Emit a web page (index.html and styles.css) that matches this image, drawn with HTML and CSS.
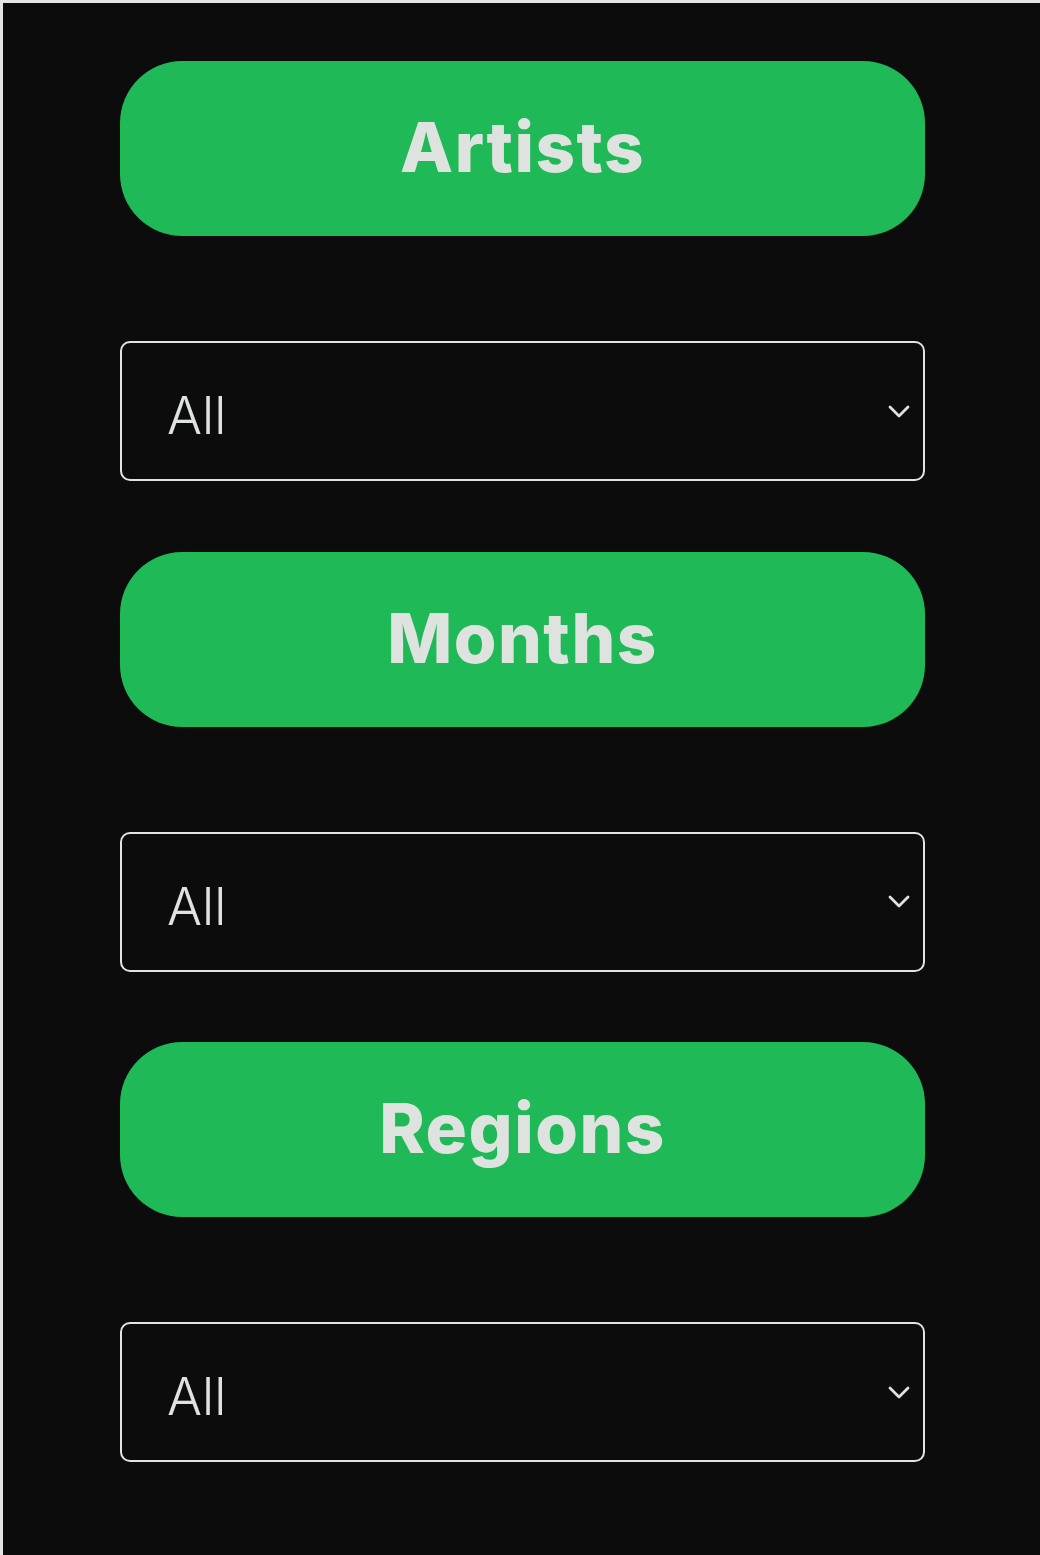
FILE: index.html
```html
<!DOCTYPE html>
<html lang="en">
<head>
<meta charset="utf-8">
<title>Filters</title>
<link rel="stylesheet" href="styles.css">
</head>
<body>
<main class="panel">
  <section class="filter">
    <button class="filter-title" type="button">Artists</button>
    <div class="select">
      <span class="select-value">All</span>
      <svg class="chevron" viewBox="0 0 22 13" width="22" height="13" aria-hidden="true"><path d="M2 2 L11 11 L20 2" fill="none" stroke="currentColor" stroke-width="2.8" stroke-linecap="round" stroke-linejoin="round"/></svg>
    </div>
  </section>
  <section class="filter">
    <button class="filter-title" type="button">Months</button>
    <div class="select">
      <span class="select-value">All</span>
      <svg class="chevron" viewBox="0 0 22 13" width="22" height="13" aria-hidden="true"><path d="M2 2 L11 11 L20 2" fill="none" stroke="currentColor" stroke-width="2.8" stroke-linecap="round" stroke-linejoin="round"/></svg>
    </div>
  </section>
  <section class="filter">
    <button class="filter-title" type="button">Regions</button>
    <div class="select">
      <span class="select-value">All</span>
      <svg class="chevron" viewBox="0 0 22 13" width="22" height="13" aria-hidden="true"><path d="M2 2 L11 11 L20 2" fill="none" stroke="currentColor" stroke-width="2.8" stroke-linecap="round" stroke-linejoin="round"/></svg>
    </div>
  </section>
</main>
</body>
</html>
```

FILE: styles.css
```css
html, body {
  margin: 0;
  padding: 0;
  background: #0c0c0c;
}

.panel {
  box-sizing: border-box;
  min-height: 1555px;
  border-top: 3px solid #e4e4e4;
  border-left: 3px solid #e4e4e4;
  background: #0c0c0c;
  padding: 58px 115px 0 117px;
  display: flex;
  flex-direction: column;
  font-family: Inter, "Liberation Sans", sans-serif;
}

.filter {
  display: flex;
  flex-direction: column;
  margin-bottom: 70.5px;
}

.filter-title {
  height: 175px;
  border: none;
  border-radius: 62px;
  background: #1fb957;
  color: #dfe3df;
  font-family: Inter, "Liberation Sans", sans-serif;
  font-weight: 800;
  font-size: 69px;
  letter-spacing: 1.5px;
  padding: 0 0 3px 0;
  margin: 0 0 105px 0;
  cursor: pointer;
}

.select {
  box-sizing: border-box;
  height: 140px;
  border: 2px solid #e2e4e2;
  border-radius: 10px;
  display: flex;
  align-items: center;
  justify-content: space-between;
  padding: 10px 13px 0 45px;
  color: #dfe3df;
}

.select-value {
  font-size: 52px;
  font-weight: 350;
  line-height: 1;
}

.chevron {
  display: block;
  color: #dfe3df;
  margin-top: -10px;
}
```
